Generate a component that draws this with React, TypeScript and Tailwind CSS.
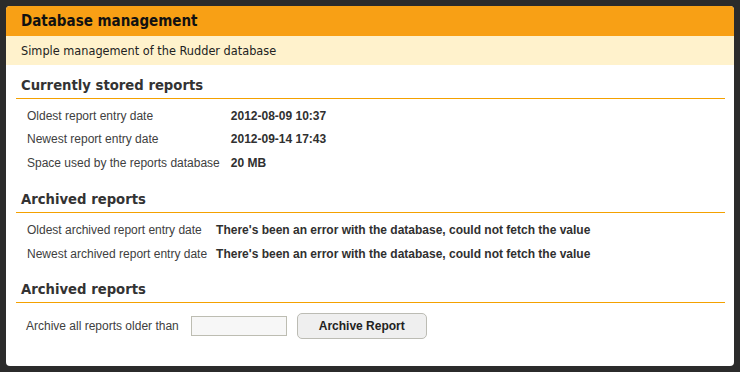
import React from 'react';

const currentRows = [
  { label: 'Oldest report entry date', value: '2012-08-09 10:37' },
  { label: 'Newest report entry date', value: '2012-09-14 17:43' },
  { label: 'Space used by the reports database', value: '20 MB' },
];

const archivedRows = [
  { label: 'Oldest archived report entry date', value: "There's been an error with the database, could not fetch the value" },
  { label: 'Newest archived report entry date', value: "There's been an error with the database, could not fetch the value" },
];

const SectionTitle: React.FC<{ title: string; className?: string }> = ({ title, className }) => (
  <h2
    className={`pl-[5px] pb-[3px] leading-[20px] text-[14.7px] font-bold text-[#333] border-b border-[#f4a100] font-['DejaVu_Sans_Condensed','DejaVu_Sans',sans-serif] font-stretch-condensed ${className ?? ''}`}
  >
    {title}
  </h2>
);

const InfoTable: React.FC<{ rows: { label: string; value: string }[]; gap?: string }> = ({ rows, gap = 'gap-x-[9px]' }) => (
  <div className={`mt-[6px] pl-[11px] grid grid-cols-[auto_1fr] ${gap} leading-[23.4px] text-[12px] font-['Liberation_Sans',Arial,sans-serif]`}>
    {rows.map((row) => (
      <React.Fragment key={row.label}>
        <div className="text-[#404040] whitespace-nowrap">{row.label}</div>
        <div className="font-bold text-[#303030] whitespace-nowrap">{row.value}</div>
      </React.Fragment>
    ))}
  </div>
);

const App: React.FC = () => {
  return (
    <div className="min-h-screen bg-[#2b2b2b] p-[6px]">
      <div className="w-[728px] h-[360px] bg-white rounded-[4px] overflow-hidden">
        <div className="h-[30px] bg-[#f8a015] pl-[15px] leading-[30px] text-[15px] font-bold text-[#111] font-['DejaVu_Sans_Condensed','DejaVu_Sans',sans-serif] font-stretch-condensed">
          Database management
        </div>
        <div className="h-[29px] bg-[#fff2cc] pl-[15px] leading-[29px] text-[12.6px] text-[#222] font-['DejaVu_Sans_Condensed','DejaVu_Sans',sans-serif] font-stretch-condensed">
          Simple management of the Rudder database
        </div>

        <div className="pl-[10px] pr-[9px]">
          <SectionTitle title="Currently stored reports" className="mt-[10px]" />
          <InfoTable rows={currentRows} gap="gap-x-[11px]" />

          <SectionTitle title="Archived reports" className="mt-[14px]" />
          <InfoTable rows={archivedRows} />

          <SectionTitle title="Archived reports" className="mt-[13px]" />
          <div className="mt-[10px] pl-[10px] flex items-center h-[26px] text-[12px] font-['Liberation_Sans',Arial,sans-serif]">
            <span className="text-[#404040]">Archive all reports older than</span>
            <input
              type="text"
              className="ml-[12px] w-[96px] h-[20px] bg-[#f7f7f7] border border-[#bdbdb2] outline-none"
            />
            <button className="ml-[10px] w-[130px] h-[26px] rounded-[5px] bg-[#efefef] border border-[#bcbcb4] font-bold text-[#222] text-[12px]">
              Archive Report
            </button>
          </div>
        </div>
      </div>
    </div>
  );
};

export default App;
